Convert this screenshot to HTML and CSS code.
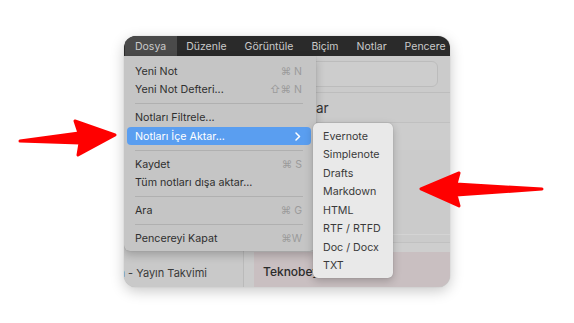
FILE: index.html
```html
<!DOCTYPE html>
<html lang="tr">
<head>
<meta charset="utf-8">
<title>Dosya menüsü</title>
<link rel="stylesheet" href="styles.css">
</head>
<body>
<div class="stage">
  <div class="window">
    <div class="menubar">
      <span class="mb-item active">Dosya</span>
      <span class="mb-item">Düzenle</span>
      <span class="mb-item">Görüntüle</span>
      <span class="mb-item">Biçim</span>
      <span class="mb-item">Notlar</span>
      <span class="mb-item">Pencere</span>
    </div>
    <div class="app">
      <aside class="sidebar">
        <div class="sb-row"><span>Plan - Yayın Takvimi</span></div>
      </aside>
      <main class="notes">
        <div class="toolbar"><div class="search"></div></div>
        <div class="list-head">Notlar</div>
        <div class="note n1"></div>
        <div class="note n2"></div>
        <div class="note n3"></div>
        <div class="note n4"></div>
        <div class="note selected">Teknobeyin</div>
      </main>

      <div class="menu">
        <div class="mi"><span>Yeni Not</span><span class="sc">⌘ N</span></div>
        <div class="mi"><span>Yeni Not Defteri...</span><span class="sc">⇧⌘ N</span></div>
        <div class="sep"></div>
        <div class="mi"><span>Notları Filtrele...</span></div>
        <div class="mi hl"><span>Notları İçe Aktar...</span>
          <svg class="chev" width="6" height="9" viewBox="0 0 6 9"><path d="M1 1 L4.5 4.5 L1 8" fill="none" stroke="#fff" stroke-width="1.5" stroke-linecap="round" stroke-linejoin="round"/></svg>
        </div>
        <div class="sep"></div>
        <div class="mi"><span>Kaydet</span><span class="sc">⌘ S</span></div>
        <div class="mi"><span>Tüm notları dışa aktar...</span></div>
        <div class="sep"></div>
        <div class="mi"><span>Ara</span><span class="sc">⌘ G</span></div>
        <div class="sep"></div>
        <div class="mi"><span>Pencereyi Kapat</span><span class="sc">⌘W</span></div>
      </div>

      <div class="submenu">
        <div class="si">Evernote</div>
        <div class="si">Simplenote</div>
        <div class="si">Drafts</div>
        <div class="si">Markdown</div>
        <div class="si">HTML</div>
        <div class="si">RTF / RTFD</div>
        <div class="si">Doc / Docx</div>
        <div class="si">TXT</div>
      </div>
    </div>
  </div>

  <svg class="arrow arrow-left" width="110" height="50" viewBox="0 0 110 50">
    <path d="M3 26 L62 18 L58 6 L98 20 L61 40 L63 28 Z" fill="#ff0000" stroke="#ff0000" stroke-width="3" stroke-linejoin="round"/>
  </svg>
  <svg class="arrow arrow-right" width="140" height="50" viewBox="0 0 140 50">
    <path d="M138 19 L52 14 L55 3 L17 19 L55 36 L52 25 Z" fill="#ff0000" stroke="#ff0000" stroke-width="3" stroke-linejoin="round"/>
  </svg>
</div>
</body>
</html>
```

FILE: styles.css
```css
* { box-sizing: border-box; }

html, body {
  margin: 0;
  background: #ffffff;
}

body {
  font-family: "Inter", "DejaVu Sans", sans-serif;
  -webkit-font-smoothing: antialiased;
}

.stage {
  position: relative;
  width: 574px;
  height: 323px;
  padding: 36px 0 0 124px;
  overflow: hidden;
}

.window {
  width: 326px;
  height: 251px;
  border-radius: 12px;
  overflow: hidden;
  background: #cacaca;
  box-shadow: 0 4px 14px rgba(0, 0, 0, 0.22), 0 0 1px rgba(0, 0, 0, 0.3);
  display: flex;
  flex-direction: column;
}

/* ---------- menu bar ---------- */
.menubar {
  height: 20px;
  flex: none;
  display: flex;
  align-items: stretch;
  background: #2a2a2a;
  padding-left: 1px;
  white-space: nowrap;
}

.mb-item {
  display: flex;
  align-items: center;
  padding: 0 9px;
  color: #cbcbcb;
  font-size: 10.5px;
}

.mb-item.active {
  background: #4a4a4a;
  padding: 0 11px 0 10px;
}

/* ---------- app behind ---------- */
.app {
  position: relative;
  flex: 1;
  display: grid;
  grid-template-columns: 120px 1fr;
  min-height: 0;
}

.sidebar {
  background: #c9c9c9;
  border-right: 1px solid #bababa;
  display: flex;
  flex-direction: column;
  overflow: hidden;
}

.sb-row {
  margin-top: auto;
  height: 32px;
  padding: 4px 36px 0 0;
  display: flex;
  align-items: center;
  justify-content: flex-end;
  white-space: nowrap;
  font-size: 11px;
  color: #3a3a3a;
}

.notes {
  display: flex;
  flex-direction: column;
  background: #cbcbcb;
  overflow: hidden;
}

.toolbar {
  height: 37px;
  flex: none;
  padding: 5px 12px 0 10px;
  border-bottom: 1px solid #bdbdbd;
}

.search {
  height: 26px;
  border-radius: 6px;
  background: #cdcdcd;
  border: 1px solid #bcbcbc;
}

.list-head {
  height: 30px;
  flex: none;
  padding-left: 46px;
  display: flex;
  align-items: center;
  font-size: 13.5px;
  color: #333;
  border-bottom: 1px solid #c0c0c0;
  white-space: nowrap;
}

.note { flex: none; }
.n1 { height: 27px; background: #cdcdcd; }
.n2 { height: 85px; background: #cbcbcb; border-bottom: 1px solid #d4d4d4; }
.n3 { height: 8px; background: #cbcbcb; border-bottom: 1px solid #c1c1c1; }
.n4 { height: 9px; background: #cecece; }

.note.selected {
  flex: 1;
  margin-left: 10px;
  background: #c9bfc1;
  padding: 12px 0 0 9px;
  font-size: 12px;
  font-weight: 500;
  color: #2b2b2b;
  white-space: nowrap;
}

/* ---------- dropdown menu ---------- */
.menu {
  position: absolute;
  left: 0;
  top: 0;
  width: 192px;
  padding: 5.75px 0 3px;
  background: #c5c5c5;
  border-radius: 0 0 6px 6px;
  box-shadow: 0 4px 10px rgba(0, 0, 0, 0.22), 0 0 1px rgba(0, 0, 0, 0.25);
  font-size: 10.7px;
  color: #2f2f2f;
  z-index: 2;
}

.mi {
  height: 18.5px;
  margin: 0 5px 0 3px;
  padding: 0 9px 0 8px;
  border-radius: 4px;
  display: flex;
  align-items: center;
  justify-content: space-between;
  white-space: nowrap;
}

.mi.hl {
  background: #5a9ef0;
  color: #ffffff;
}

.chev { margin-right: 1px; }

.sc {
  color: #9b9b9b;
  font-size: 10.5px;
}

.sep {
  height: 1px;
  margin: 4.25px 13px 4.25px 11px;
  background: #b0b0b0;
}

/* ---------- submenu ---------- */
.submenu {
  position: absolute;
  left: 189px;
  top: 67px;
  width: 80px;
  padding: 3.75px 0 3.5px;
  background: #e9e9e9;
  border-radius: 5px;
  box-shadow: 0 3px 9px rgba(0, 0, 0, 0.22), 0 0 1px rgba(0, 0, 0, 0.3);
  font-size: 10.7px;
  color: #3a3a3a;
  z-index: 3;
}

.si {
  height: 18.5px;
  padding-left: 10px;
  display: flex;
  align-items: center;
  white-space: nowrap;
}

/* ---------- annotation arrows ---------- */
.arrow {
  position: absolute;
  z-index: 5;
}

.arrow-left { left: 17px; top: 115px; }
.arrow-right { left: 404px; top: 170px; }
```
